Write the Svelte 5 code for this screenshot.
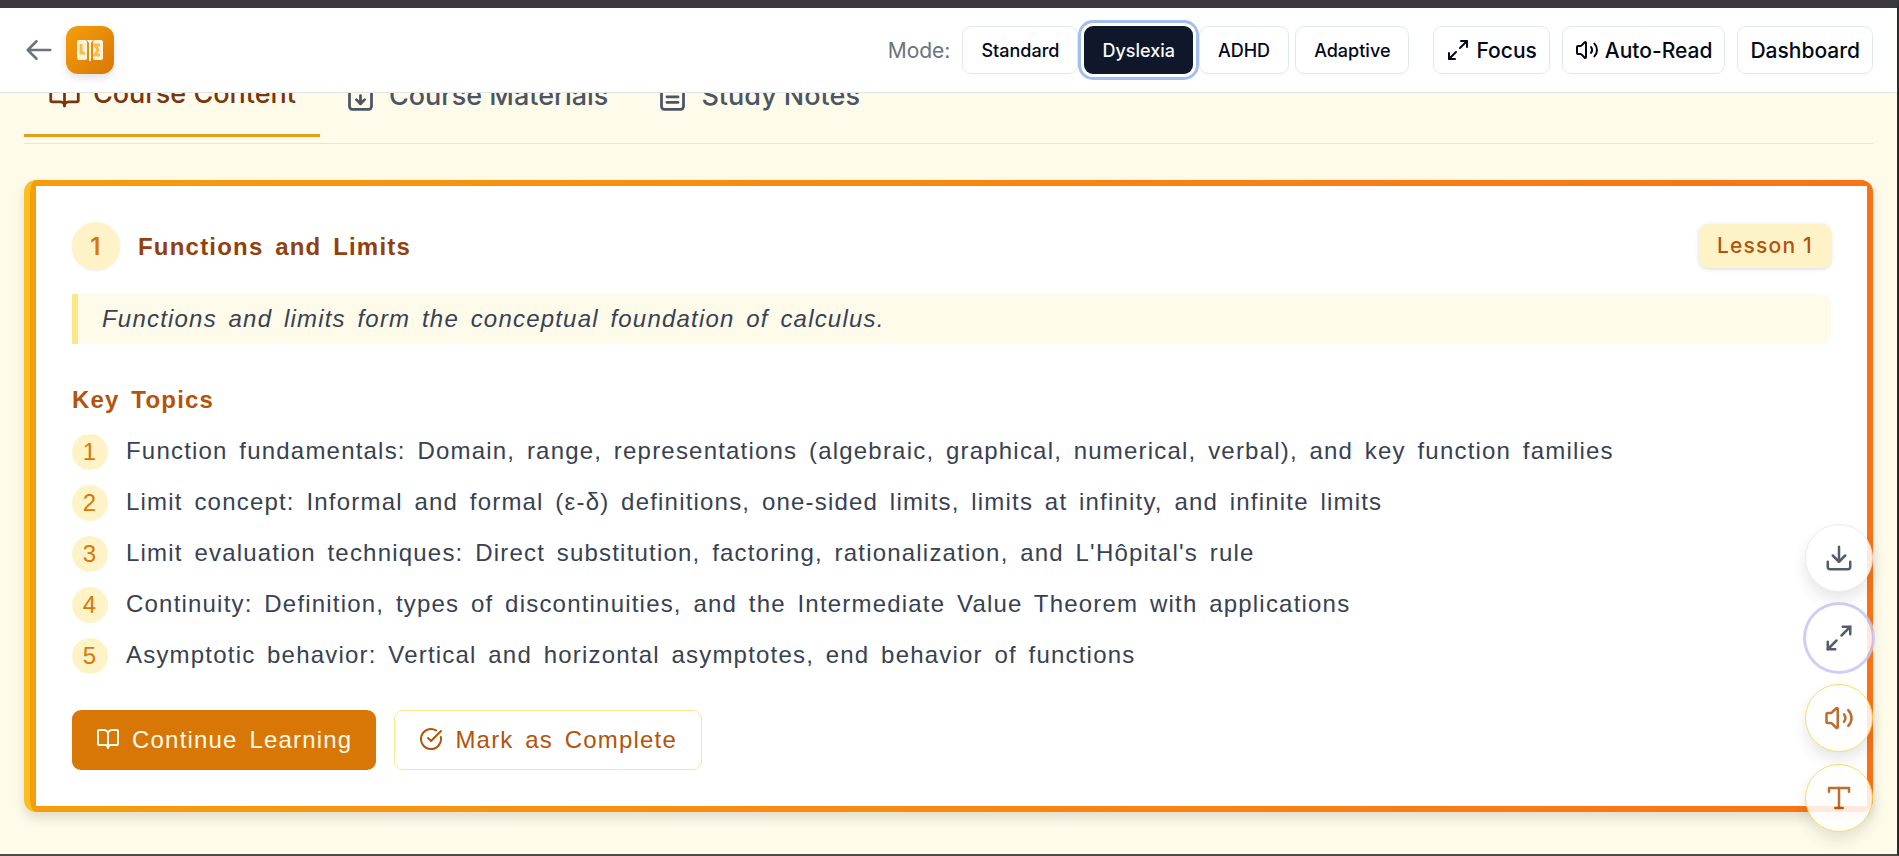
<script>
  const modes = ['Standard', 'Dyslexia', 'ADHD', 'Adaptive'];
  let mode = $state('Dyslexia');
  const tabs = [
    { label: 'Course Content', icon: 'book' },
    { label: 'Course Materials', icon: 'fileDown' },
    { label: 'Study Notes', icon: 'fileText' }
  ];
  let tab = $state('Course Content');
  const topics = [
    'Function fundamentals: Domain, range, representations (algebraic, graphical, numerical, verbal), and key function families',
    'Limit concept: Informal and formal (ε-δ) definitions, one-sided limits, limits at infinity, and infinite limits',
    "Limit evaluation techniques: Direct substitution, factoring, rationalization, and L'Hôpital's rule",
    'Continuity: Definition, types of discontinuities, and the Intermediate Value Theorem with applications',
    'Asymptotic behavior: Vertical and horizontal asymptotes, end behavior of functions'
  ];
  const tools = [
    { label: 'Download', icon: 'download', kind: 'plain' },
    { label: 'Focus mode', icon: 'expand', kind: 'ring' },
    { label: 'Read aloud', icon: 'volume', kind: 'amber' },
    { label: 'Text settings', icon: 'type', kind: 'amber' }
  ];
  const paths = {
    back: ['M10 19l-7-7m0 0l7-7m-7 7h18'],
    book: ['M12 7v14', 'M3 18a1 1 0 0 1-1-1V4a1 1 0 0 1 1-1h5a4 4 0 0 1 4 4 4 4 0 0 1 4-4h5a1 1 0 0 1 1 1v13a1 1 0 0 1-1 1h-6a3 3 0 0 0-3 3 3 3 0 0 0-3-3z'],
    fileDown: ['M15 2H6a2 2 0 0 0-2 2v16a2 2 0 0 0 2 2h12a2 2 0 0 0 2-2V7z', 'M14 2v4a2 2 0 0 0 2 2h4', 'M12 18v-6', 'm9 15 3 3 3-3'],
    fileText: ['M15 2H6a2 2 0 0 0-2 2v16a2 2 0 0 0 2 2h12a2 2 0 0 0 2-2V7z', 'M14 2v4a2 2 0 0 0 2 2h4', 'M10 9H8', 'M16 13H8', 'M16 17H8'],
    expand: ['M15 3h6v6', 'M9 21H3v-6', 'M21 3l-7 7', 'M3 21l7-7'],
    volume: ['M11 4.702a.705.705 0 0 0-1.203-.498L6.413 7.587A1.4 1.4 0 0 1 5.416 8H3a1 1 0 0 0-1 1v6a1 1 0 0 0 1 1h2.416a1.4 1.4 0 0 1 .997.413l3.383 3.384A.705.705 0 0 0 11 19.298z', 'M16 9a5 5 0 0 1 0 6', 'M19.364 18.364a9 9 0 0 0 0-12.728'],
    download: ['M21 15v4a2 2 0 0 1-2 2H5a2 2 0 0 1-2-2v-4', 'M7 10l5 5 5-5', 'M12 15V3'],
    type: ['M4 7V4h16v3', 'M9 20h6', 'M12 4v16'],
    check: ['M21.801 10A10 10 0 1 1 17 3.335', 'm9 11 3 3L22 4']
  };
</script>

{#snippet icon(name, size)}
  <svg width={size} height={size} viewBox="0 0 24 24" fill="none" stroke="currentColor" stroke-width="2" stroke-linecap="round" stroke-linejoin="round" aria-hidden="true">
    {#each paths[name] as d}<path {d} />{/each}
  </svg>
{/snippet}

<div class="page">
  <header>
    <div class="brand">
      <button class="back" aria-label="Back">{@render icon('back', 30)}</button>
      <a class="logo" href="#home" aria-label="Home">
        <svg width="30" height="30" viewBox="0 0 30 30" aria-hidden="true">
          <rect x="2" y="5" width="10" height="20" rx="2" fill="#fef3dc" />
          <rect x="18" y="5" width="10" height="20" rx="2" fill="#fef3dc" />
          <path d="M12 5h6l-2 3v18h-2V8z" fill="#fffaf0" />
          <path d="M6 9v9h4" fill="none" stroke="#f8bd45" stroke-width="3" />
          <path d="M25 10h-5l3 5-3 5h5" fill="none" stroke="#f8bd45" stroke-width="3" />
        </svg>
      </a>
    </div>
    <div class="controls">
      <div class="modes" role="group" aria-label="Mode">
        <span class="mode-label">Mode:</span>
        <div class="mode-list">
          {#each modes as m}
            <button class="mode" class:active={mode === m} aria-pressed={mode === m} onclick={() => (mode = m)}>{m}</button>
          {/each}
        </div>
      </div>
      <div class="actions">
        <button class="action">{@render icon('expand', 24)}Focus</button>
        <button class="action">{@render icon('volume', 24)}Auto-Read</button>
        <a class="action" href="#dashboard">Dashboard</a>
      </div>
    </div>
  </header>

  <main>
    <nav class="tabs">
      {#each tabs as t}
        <button class="tab" class:current={tab === t.label} onclick={() => (tab = t.label)}>{@render icon(t.icon, 33)}{t.label}</button>
      {/each}
    </nav>

    <article class="card">
      <div class="card-body">
        <div class="card-head">
          <div class="title">
            <span class="number">1</span>
            <h2>Functions and Limits</h2>
          </div>
          <span class="badge">Lesson 1</span>
        </div>
        <p class="summary">Functions and limits form the conceptual foundation of calculus.</p>
        <h3>Key Topics</h3>
        <ol>
          {#each topics as topic, i}
            <li><span class="bullet">{i + 1}</span><span>{topic}</span></li>
          {/each}
        </ol>
        <div class="buttons">
          <button class="cta primary">{@render icon('book', 24)}Continue Learning</button>
          <button class="cta">{@render icon('check', 24)}Mark as Complete</button>
        </div>
      </div>
    </article>
  </main>

  <div class="tools">
    {#each tools as t}
      <button class="tool {t.kind}" aria-label={t.label}>{@render icon(t.icon, 30)}</button>
    {/each}
  </div>
</div>

<style>
  :global(body) {
    margin: 0;
  }
  .page,
  .page * {
    box-sizing: border-box;
  }
  .page {
    height: 100vh;
    overflow: hidden;
    background: #fffbeb;
    border-top: 8px solid #3b393e;
    border-right: 2px solid #2b2b29;
    border-bottom: 2px solid #4b4c46;
    font-family: Inter, sans-serif;
  }
  button,
  a {
    font: inherit;
    color: inherit;
    background: none;
    border: 0;
    padding: 0;
    text-decoration: none;
    cursor: pointer;
  }
  svg {
    display: block;
    flex: none;
  }
  header {
    position: relative;
    z-index: 2;
    display: flex;
    align-items: center;
    justify-content: space-between;
    padding: 18px 24px;
    background: #fff;
    border-bottom: 1px solid #e2e5e8;
  }
  .brand {
    display: flex;
    align-items: center;
    gap: 12px;
  }
  .back {
    color: #6b7280;
  }
  .logo {
    display: grid;
    place-items: center;
    width: 48px;
    height: 48px;
    border-radius: 12px;
    background: linear-gradient(135deg, #f59e0b, #d97706);
    box-shadow: 0 4px 8px rgb(0 0 0 / 12%);
  }
  .controls {
    display: flex;
    align-items: center;
    gap: 24px;
  }
  .modes,
  .actions {
    display: flex;
    align-items: center;
    gap: 12px;
  }
  .mode-label {
    font-size: 21px;
    color: #6b7280;
  }
  .mode-list {
    display: flex;
    gap: 6px;
  }
  .mode,
  .action {
    display: flex;
    align-items: center;
    height: 48px;
    border: 1px solid #e2e8f0;
    border-radius: 9px;
    background: #fff;
    color: #020817;
    font-weight: 500;
    white-space: nowrap;
  }
  .mode {
    padding: 0 18px;
    font-size: 18px;
  }
  .mode.active {
    position: relative;
    background: #0f172a;
    border: 0;
    color: #f8fafc;
    box-shadow: 0 0 0 3px #fff, 0 0 0 6px #a3bff0;
  }
  .action {
    gap: 6px;
    padding: 0 12px;
    font-size: 21px;
  }
  main {
    padding: 0 24px;
    margin-top: -40px;
  }
  .tabs {
    display: flex;
    padding-bottom: 6px;
    border-bottom: 1px solid #e2e5e8;
    margin-bottom: 36px;
  }
  .tab {
    display: flex;
    align-items: center;
    gap: 12px;
    padding: 24px;
    font-size: 27px;
    line-height: 33px;
    font-weight: 500;
    color: #4b5563;
  }
  .tab.current {
    color: #78350f;
    border-bottom: 3px solid #e89c1c;
  }
  .card {
    padding: 6px;
    border-left: 6px solid #fbbf24;
    border-radius: 12px;
    background: linear-gradient(90deg, #f59e0b, #f97316) padding-box, #fbbf24;
    box-shadow: 0 6px 12px rgb(0 0 0 / 12%);
  }
  .card-body {
    padding: 36px;
    background: #fff;
    font-family: "Liberation Sans", Arial, sans-serif;
    font-size: 24px;
    line-height: 39px;
    letter-spacing: 0.05em;
    word-spacing: 0.16em;
    color: #374151;
  }
  .card-head,
  .title,
  .buttons {
    display: flex;
    align-items: center;
  }
  .card-head {
    justify-content: space-between;
    margin-bottom: 24px;
  }
  .title,
  .buttons {
    gap: 18px;
  }
  .number,
  .bullet {
    display: grid;
    place-items: center;
    flex: none;
    border-radius: 50%;
    background: #fef3c7;
    color: #d97706;
  }
  .number {
    width: 48px;
    height: 48px;
    font-family: Inter, sans-serif;
    font-weight: 600;
    box-shadow: 0 1px 3px rgb(0 0 0 / 8%);
  }
  h2,
  h3,
  p,
  ol {
    margin: 0;
    font-size: inherit;
  }
  h2 {
    color: #92400e;
  }
  .badge {
    padding: 6px 18px;
    border-radius: 9px;
    background: #fef3c7;
    color: #b45309;
    font-family: Inter, sans-serif;
    font-size: 21px;
    font-weight: 500;
    line-height: 32px;
    box-shadow: 0 1px 4px rgb(0 0 0 / 15%);
    word-spacing: 0;
  }
  .summary {
    padding: 6px 24px;
    border-left: 6px solid #fde68a;
    border-radius: 0 9px 9px 0;
    background: #fffbeb;
    font-style: italic;
    line-height: 38px;
    margin-bottom: 36px;
  }
  h3 {
    margin-bottom: 12px;
    color: #b45309;
  }
  ol {
    display: flex;
    flex-direction: column;
    gap: 12px;
    padding: 0;
    margin-bottom: 36px;
    list-style: none;
  }
  li {
    display: flex;
    gap: 18px;
  }
  .bullet {
    width: 36px;
    height: 36px;
    margin-top: 3px;
    line-height: 36px;
  }
  .cta {
    display: flex;
    align-items: center;
    gap: 12px;
    height: 60px;
    padding: 0 24px 2px;
    border: 1px solid #fde68a;
    border-radius: 9px;
    color: #b45309;
    letter-spacing: inherit;
    word-spacing: inherit;
  }
  .cta.primary {
    background: #d97706;
    border: 0;
    color: #fffbeb;
  }
  .tools {
    position: fixed;
    z-index: 3;
    right: 26px;
    bottom: 24px;
    display: flex;
    flex-direction: column;
    gap: 12px;
  }
  .tool {
    display: grid;
    place-items: center;
    width: 68px;
    height: 68px;
    border: 1px solid #e5e7eb;
    border-radius: 50%;
    background: #fff;
    color: #374151;
    opacity: 0.85;
    box-shadow: 0 8px 16px rgb(0 0 0 / 12%);
  }
  .tool.amber {
    border-color: #fcd34d;
    color: #b45309;
  }
  .tool.ring {
    border-color: #c7c5f5;
    box-shadow: 0 0 0 2px #c7c5f5;
  }
</style>
